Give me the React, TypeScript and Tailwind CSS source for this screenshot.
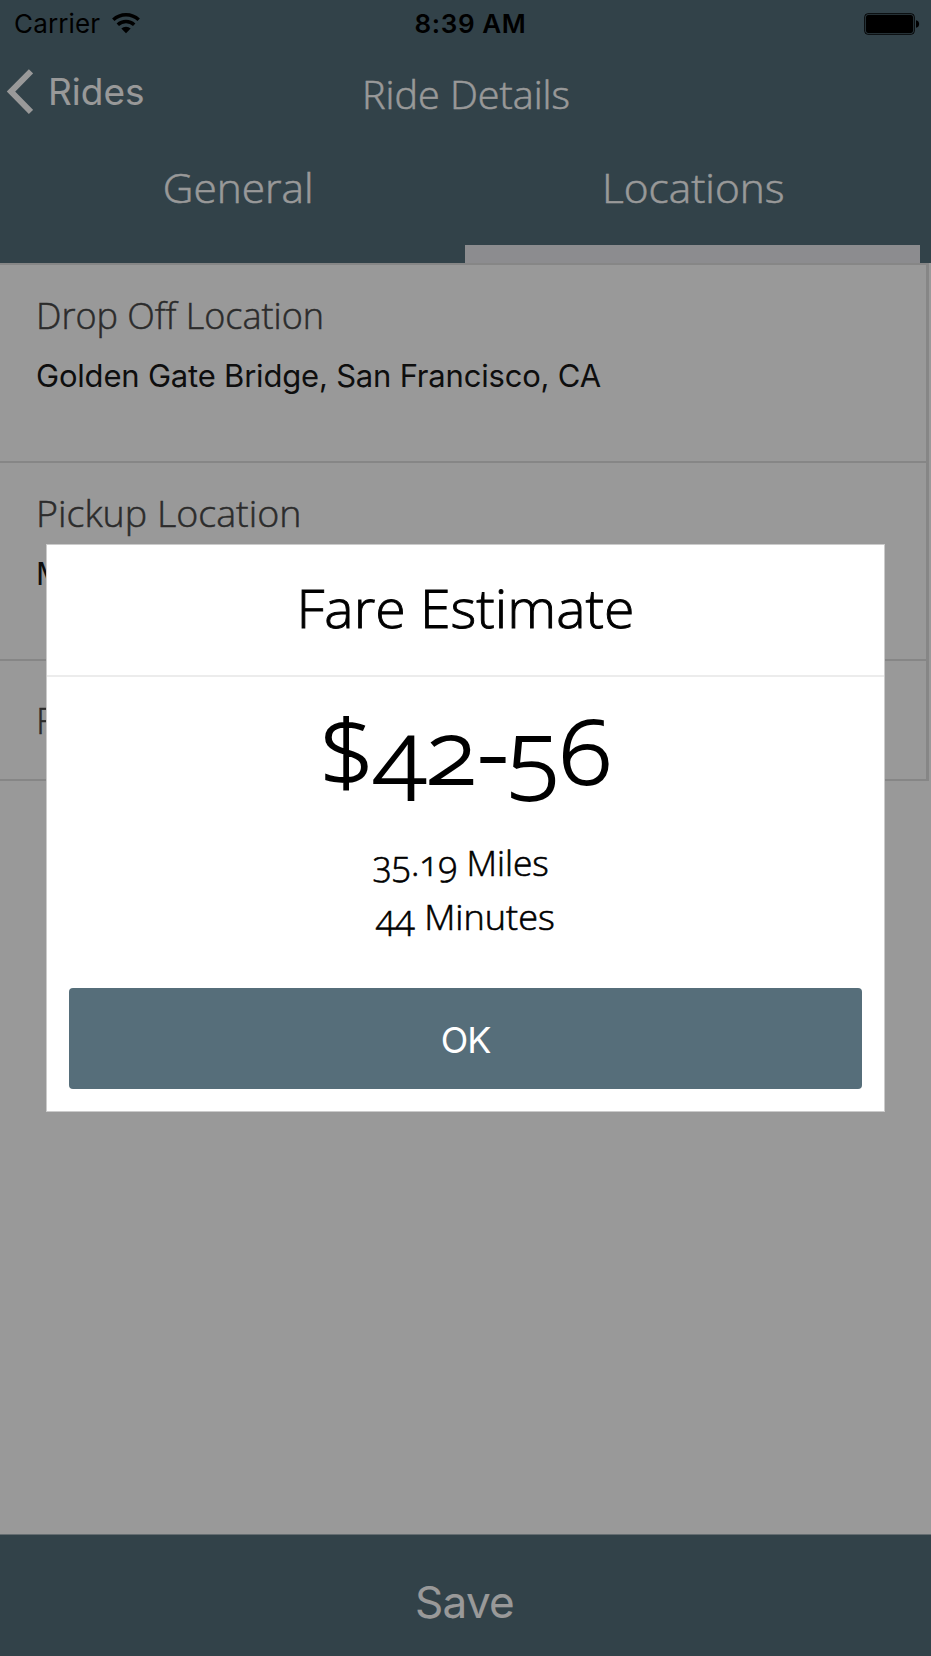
function StatusBar() {
  return (
    <div className="grid h-[46px] grid-cols-3 items-center pt-px text-[26px] leading-[46px] text-black">
      <div className="flex items-center gap-3 pl-[14px]">
        <span className="tracking-[0.15px]">Carrier</span>
        <svg width="28" height="21" viewBox="0 0 28 21" className="-mt-0.5" fill="none" stroke="#000">
          <path d="M1.3 6.8 A18.5 18.5 0 0 1 26.7 6.8" strokeWidth="3.5" />
          <path d="M5.8 11.8 A12 12 0 0 1 22.2 11.8" strokeWidth="3.5" />
          <path d="M14 20.3 L9.3 15.6 A6.8 6.8 0 0 1 18.7 15.6 Z" fill="#000" stroke="none" />
        </svg>
      </div>
      <span className="pl-[10px] text-center font-semibold tracking-[0.6px]">8:39 AM</span>
      <div className="flex items-center justify-end pr-[11px]">
        <svg width="56" height="22" viewBox="0 0 56 22">
          <rect x="0.75" y="0.75" width="49.5" height="20.5" rx="3" fill="none" stroke="#000" />
          <rect x="2" y="2" width="47" height="18" rx="2" />
          <path d="M52 7.2 C56.2 7.8 56.2 14.2 52 14.8 Z" />
        </svg>
      </div>
    </div>
  );
}

function NavBar() {
  return (
    <div className="grid h-[91px] grid-cols-[1fr_auto_1fr] items-center text-white">
      <button className="flex items-center gap-[15px] pl-[6px] text-[37px] leading-[91px]">
        <svg width="27" height="46" viewBox="0 0 27 46" fill="none" stroke="#fff" strokeWidth="6">
          <path d="M25 2.3 L5 22.6 L25 42.9" />
        </svg>
        Rides
      </button>
      <h1 className="scale-x-[1.04] pt-[6px] font-['Open_Sans',sans-serif] text-[38px] font-light [-webkit-text-stroke:0.5px]">
        Ride Details
      </h1>
      <span />
    </div>
  );
}

function Tabs() {
  return (
    <div className="grid h-[126px] grid-cols-2 px-[11px] text-center font-['Open_Sans',sans-serif] text-[40px] leading-[99px] font-light text-white [-webkit-text-stroke:0.5px]">
      <div className="scale-x-[1.06] pt-px">General</div>
      <div className="flex flex-col justify-between">
        <span className="-mb-px scale-x-[1.06] pt-px">Locations</span>
        <span className="-ml-px block h-[18px] bg-[#e9eaee]" />
      </div>
    </div>
  );
}

const labelClass =
  "origin-left font-['Open_Sans',sans-serif] text-[36px] leading-[44px] font-light text-[#494949] [-webkit-text-stroke:0.5px]";
const valueClass = "mt-[18px] text-[31px] leading-[40px] tracking-[-0.2px] text-[#181818]";
const rowClass = "h-[198px] border-b-[2px] border-[#dfdfdf] pt-[29px] pl-[36px]";

function LocationList() {
  return (
    <div className="w-[929px] border-t-2 border-r-[3px] border-[#dfdfdf]">
      <div className={rowClass}>
        <p className={labelClass}>Drop Off Location</p>
        <p className={valueClass}>Golden Gate Bridge, San Francisco, CA</p>
      </div>
      <div className={rowClass}>
        <p className={labelClass + " scale-x-[1.045]"}>Pickup Location</p>
        <p className={valueClass}>M</p>
      </div>
      <div className="flex h-[120px] items-center border-b-2 border-[#dfdfdf] pt-[2px] pl-[36px]">
        <p className={labelClass}>F</p>
      </div>
    </div>
  );
}

function FareDialog() {
  return (
    <div className="flex h-[568px] w-[839px] flex-col border border-[#cbcbcb] bg-white text-center font-['Open_Sans',sans-serif] font-light text-black">
      <div className="h-[132px] border-b-2 border-[#ececec]">
        <h2 className="scale-x-[1.025] text-[54px] leading-[124px] [-webkit-text-stroke:0.9px]">
          Fare Estimate
        </h2>
      </div>
      <p className="mt-[18px] scale-x-[1.09] text-[88px] leading-[110px] oldstyle-nums [-webkit-text-stroke:1.8px]">
        $42-56
      </p>
      <div className="mt-[31px] text-[35px] leading-[54px] oldstyle-nums [-webkit-text-stroke:0.6px]">
        <p className="scale-x-[1.01] pr-[9px]">35.19 Miles</p>
        <p className="scale-x-[1.03]">44 Minutes</p>
      </div>
      <button className="mx-[22px] mt-auto mb-[22px] h-[101px] rounded-[4px] bg-[#566e7a] pt-[2px] font-['Inter',sans-serif] text-[36px] font-normal tracking-[-1px] text-white">
        OK
      </button>
    </div>
  );
}

export default function App() {
  return (
    <div className="relative flex h-[1656px] w-[931px] flex-col overflow-hidden bg-white font-['Inter',sans-serif]">
      <header className="h-[263px] bg-[#546e7a]">
        <StatusBar />
        <NavBar />
        <Tabs />
      </header>
      <main className="flex-1">
        <LocationList />
      </main>
      <button className="h-[122px] border-t border-[#a9b6bc] bg-[#546e7a] pt-[13px] pr-[2px] text-[44px] leading-[108px] tracking-[-0.7px] text-white">
        Save
      </button>
      <div className="absolute inset-0 flex items-center justify-center bg-black/40">
        <FareDialog />
      </div>
    </div>
  );
}
